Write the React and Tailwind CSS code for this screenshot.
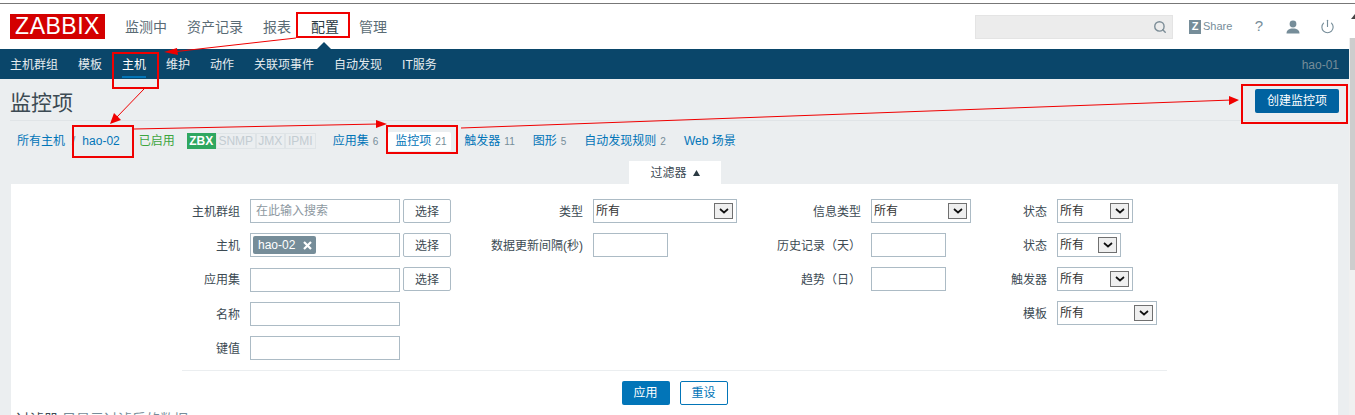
import React from "react";
import { Search, Power } from "lucide-react";

function Box({ x, y, w, h }) {
  return <rect x={x + 1} y={y + 1} width={w - 2} height={h - 2} fill="none" stroke="#f00000" strokeWidth="2" />;
}

function Annotations() {
  return (
    <svg className="absolute left-0 top-0 pointer-events-none" width="1355" height="415">
      <Box x={296} y={12} w={54} h={26} />
      <Box x={112} y={52} w={47} h={37} />
      <Box x={72} y={125} w={62} h={33} />
      <Box x={386} y={125} w={72} h={29} />
      <Box x={1241} y={84} w={107} h={40} />
      <g stroke="#f00000" strokeWidth="1" fill="none">
        <line x1="296" y1="38" x2="172" y2="52" />
        <line x1="144" y1="89" x2="116" y2="118" />
        <line x1="134" y1="129" x2="378" y2="124" />
        <line x1="461" y1="128" x2="1232" y2="100" />
      </g>
      <g fill="#f00000">
        <polygon points="164,52 177,48 178,55" />
        <polygon points="110,124 114,113 121,120" />
        <polygon points="387,124 376,120 376,128" />
        <polygon points="1239,100 1229,96 1229,105" />
      </g>
    </svg>
  );
}

function Chevron() {
  return (
    <span className="flex h-4 w-[19px] items-center justify-center border border-[#707070] bg-[#efefef]">
      <svg width="10" height="6" viewBox="0 0 10 6">
        <path d="M1 1l4 3.5L9 1" fill="none" stroke="#111" strokeWidth="1.7" />
      </svg>
    </span>
  );
}

function Select({ w }) {
  return (
    <div className={`flex h-6 items-center justify-between border border-[#acbbc5] bg-white pl-[2px] pr-[3px] text-[12px] text-[#333] ${w}`}>
      <span>所有</span>
      <Chevron />
    </div>
  );
}

function Input({ w, children, className = "" }) {
  return <div className={`flex h-6 items-center border border-[#acbbc5] bg-white ${w} ${className}`}>{children}</div>;
}

function PickButton() {
  return (
    <div className="flex h-6 w-12 items-center justify-center rounded-[2px] border border-[#acbbc5] bg-white pt-px text-[12px] text-[#3c4a53]">
      选择
    </div>
  );
}

function Row({ label, labelWidth, children }) {
  return (
    <div className="flex h-6 items-start">
      <div className={`h-6 pr-[10px] text-right text-[12px] leading-[26px] whitespace-nowrap text-[#3c4a53] ${labelWidth}`}>{label}</div>
      {children}
    </div>
  );
}

function Filter() {
  return (
    <div className="mx-auto w-[985px] pt-[15px]">
      <div className="flex">
        <div className="flex flex-col gap-[10px]">
          <Row label="主机群组" labelWidth="w-[68px]">
            <Input w="w-[150px]" className="mr-[3px]">
              <span className="pl-[5px] text-[12px] text-[#8d989f]">在此输入搜索</span>
            </Input>
            <PickButton />
          </Row>
          <Row label="主机" labelWidth="w-[68px]">
            <Input w="w-[150px]" className="mr-[3px]">
              <span className="ml-[2px] flex h-[18px] w-[63px] items-center justify-between rounded-[2px] bg-[#768d99] pl-[5px] pr-[4px] text-[12px] font-bold text-white">
                <span className="font-normal">hao-02</span>
                <svg width="9" height="9" viewBox="0 0 9 9">
                  <path d="M1 1l7 7M8 1l-7 7" stroke="#fff" strokeWidth="2.2" />
                </svg>
              </span>
            </Input>
            <PickButton />
          </Row>
          <Row label="应用集" labelWidth="w-[68px]">
            <Input w="w-[150px]" className="mr-[3px] mt-px">{null}</Input>
            <PickButton />
          </Row>
          <div className="mt-px">
            <Row label="名称" labelWidth="w-[68px]">
              <Input w="w-[150px]">{null}</Input>
            </Row>
          </div>
          <Row label="键值" labelWidth="w-[68px]">
            <Input w="w-[150px]">{null}</Input>
          </Row>
        </div>

        <div className="flex flex-col gap-[10px]">
          <Row label="类型" labelWidth="w-[142px]">
            <Select w="w-[144px]" />
          </Row>
          <Row label="数据更新间隔(秒)" labelWidth="w-[142px]">
            <Input w="w-[75px]">{null}</Input>
          </Row>
        </div>

        <div className="flex flex-col gap-[10px]">
          <Row label="信息类型" labelWidth="w-[134px]">
            <Select w="w-[100px]" />
          </Row>
          <Row label="历史记录（天）" labelWidth="w-[134px]">
            <Input w="w-[75px]">{null}</Input>
          </Row>
          <Row label="趋势（日）" labelWidth="w-[134px]">
            <Input w="w-[75px]">{null}</Input>
          </Row>
        </div>

        <div className="flex flex-col gap-[10px]">
          <Row label="状态" labelWidth="w-[86px]">
            <Select w="w-[76px]" />
          </Row>
          <Row label="状态" labelWidth="w-[86px]">
            <Select w="w-[64px]" />
          </Row>
          <Row label="触发器" labelWidth="w-[86px]">
            <Select w="w-[76px]" />
          </Row>
          <Row label="模板" labelWidth="w-[86px]">
            <Select w="w-[100px]" />
          </Row>
        </div>
      </div>

      <div className="mt-[10px] h-px bg-[#ebeef0]" />
      <div className="flex justify-center gap-[10px] pt-[10px]">
        <div className="flex h-6 w-12 items-center justify-center rounded-[2px] bg-[#0275b8] text-[12px] text-white">应用</div>
        <div className="flex h-6 w-12 items-center justify-center rounded-[2px] border border-[#0275b8] bg-white text-[12px] text-[#0275b8]">重设</div>
      </div>
    </div>
  );
}

function Tag({ children, w, active }) {
  return (
    <span
      className={`flex h-4 items-center justify-center text-[12px] ${w} ${
        active ? "bg-[#2fa760] font-bold text-white" : "border border-[#dfe4e7] bg-[#ebeef0] text-[#c3ccd2]"
      }`}
    >
      {children}
    </span>
  );
}

function Count({ children }) {
  return <span className="ml-[4px] text-[10px] text-[#768d99]">{children}</span>;
}

export default function App() {
  const top = ["监测中", "资产记录", "报表"];
  return (
    <div className="relative h-[415px] w-[1355px] overflow-hidden bg-white font-['Liberation_Sans','Noto_Sans_CJK_SC',sans-serif]">
      <div className="h-[3px] bg-white" />
      <div className="h-px bg-[#777]" />

      <div className="flex">
        <div className="w-[1349px] shrink-0">
          <header className="flex h-[45px] items-center bg-white pl-[10px]">
            <div className="flex h-[25px] w-[95px] items-center justify-center bg-[#d40000] text-[23px] leading-none tracking-[0.5px] text-white">
              ZABBIX
            </div>
            <nav className="ml-[20px] flex items-center gap-[20px] pt-px text-[14px] text-[#5a6b75]">
              {top.map((t) => (
                <span key={t}>{t}</span>
              ))}
              <span className="relative text-[#2b3a42]">
                配置
                <span className="absolute left-[6px] top-[25px] h-0 w-0 border-x-[7px] border-b-[7px] border-x-transparent border-b-[#0a466a]" />
              </span>
              <span>管理</span>
            </nav>
            <div className="ml-auto flex items-center">
              <div className="flex h-6 w-[198px] items-center justify-end border border-[#e4e4e4] bg-[#ececec] pr-[5px]">
                <Search size={14} strokeWidth={2.4} className="text-[#7c8d97]" />
              </div>
              <div className="ml-4 flex h-[14px] w-[12px] items-center justify-center bg-[#768d99] text-[11px] font-bold leading-none text-white">Z</div>
              <span className="ml-[2px] w-[29px] text-[11px] text-[#768d99]">Share</span>
              <span className="ml-[22px] w-[10px] text-center text-[15px] text-[#768d99]">?</span>
              <svg className="ml-[22px]" width="14" height="14" viewBox="0 0 14 14" fill="#768d99">
                <circle cx="7" cy="4" r="3.4" />
                <path d="M0.5 13.5C0.5 10 3 8.5 7 8.5s6.500 1.500 6.500 5z" />
              </svg>
              <Power size={15} strokeWidth={1.8} className="ml-[20px] mr-[14px] text-[#768d99]" />
            </div>
          </header>

          <div className="flex h-[30px] items-center justify-between bg-[#0a466a] px-[10px] pt-px text-[12px] text-[#e6ecef]">
            <div className="flex h-full items-center gap-[20px]">
              <span>主机群组</span>
              <span>模板</span>
              <span className="relative text-white">
                主机
                <span className="absolute left-0 top-[20px] h-[2px] w-6 bg-[#0275b8]" />
              </span>
              <span>维护</span>
              <span>动作</span>
              <span>关联项事件</span>
              <span>自动发现</span>
              <span>IT服务</span>
            </div>
            <span className="text-[#768d99]">hao-01</span>
          </div>

          <main className="h-[336px] overflow-hidden bg-[#ebeef0] px-[10px]">
            <div className="flex h-[42px] items-start justify-between border-b border-[#e0e4e7]">
              <h1 className="pt-[8px] text-[21px] leading-[32px] text-[#3c4a53]">监控项</h1>
              <div className="mt-[10px] flex h-6 w-[84px] items-center justify-center rounded-[2px] bg-[#0062a0] text-[12px] text-white">创建监控项</div>
            </div>

            <div className="flex h-[40px] items-center whitespace-nowrap pl-[7px] text-[12px] text-[#0275b8]">
              <span>所有主机</span>
              <span className="ml-[7px] text-[#768d99]">/</span>
              <span className="ml-[7px]">hao-02</span>
              <span className="ml-[19px] text-[#3da53f]">已启用</span>
              <span className="ml-[12px] -mt-px flex">
                <Tag w="w-[29px]" active>ZBX</Tag>
                <Tag w="w-[40px]">SNMP</Tag>
                <Tag w="w-[29px]">JMX</Tag>
                <Tag w="w-[31px]">IPMI</Tag>
              </span>
              <span className="ml-[17px]">应用集<Count>6</Count></span>
              <span className="ml-[10px] flex h-[19px] w-[63px] items-center rounded-[2px] bg-white pl-[7px]">监控项<Count>21</Count></span>
              <span className="ml-[13px]">触发器<Count>11</Count></span>
              <span className="ml-[18px]">图形<Count>5</Count></span>
              <span className="ml-[18px]">自动发现规则<Count>2</Count></span>
              <span className="ml-[18px]">Web 场景</span>
            </div>

            <div className="flex justify-center pl-[1px]">
              <div className="flex h-[23px] w-[92px] items-center justify-center gap-[6px] bg-white text-[12px] text-[#3c4a53]">
                过滤器
                <svg width="7" height="6" viewBox="0 0 7 6"><path d="M3.500 0L7 6H0z" fill="#2b3a42" /></svg>
              </div>
            </div>

            <div className="mx-px h-[400px] bg-white">
              <Filter />
              <div className="pl-[5px] pt-[4px] text-[14px] leading-[20px] text-[#768d99]">
                <span className="text-[#3c4a53]">过滤器</span> 只显示过滤后的数据
              </div>
            </div>
          </main>
        </div>

        <div className="flex w-[6px] flex-col">
          <div className="flex h-[34px] items-center justify-end bg-white">
            <svg width="4" height="5" viewBox="0 0 4 5" className="mb-[10px]"><path d="M4 0v5H0z" fill="#444" /></svg>
          </div>
          <div className="flex flex-1 bg-[#f0f0f0] pl-px">
            <div className="h-[232px] w-full bg-[#cdcdcd]" />
          </div>
        </div>
      </div>

      <Annotations />
    </div>
  );
}
